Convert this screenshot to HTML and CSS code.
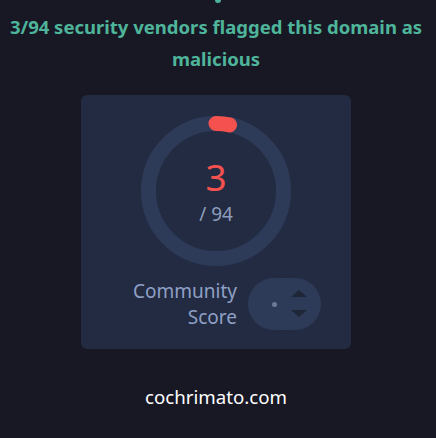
FILE: index.html
```html
<!DOCTYPE html>
<html>
<head>
<meta charset="utf-8">
<link rel="stylesheet" href="styles.css">
</head>
<body>
<div class="page">
  <div class="frag"></div>
  <h1 class="title">3/94 security vendors flagged this domain as malicious</h1>
  <div class="card">
    <div class="gauge">
      <svg width="150" height="150" viewBox="0 0 150 150">
        <circle cx="75" cy="75" r="67.5" fill="none" stroke="#2d3b58" stroke-width="15"/>
        <path d="M75 7.5 A67.5 67.5 0 0 1 88.5 8.9" fill="none" stroke="#f5524f" stroke-width="15" stroke-linecap="round"/>
      </svg>
      <div class="gauge-text">
        <div class="num">3</div>
        <div class="total">/ 94</div>
      </div>
    </div>
    <div class="community">
      <div class="label">Community<br>Score</div>
      <div class="pill">
        <span class="dot"></span>
        <span class="arrows">
          <svg width="16" height="28" viewBox="0 0 16 28"><path d="M8 0 L16 7 L0 7 Z" fill="#1f2638"/><path d="M0 20 L16 20 L8 27 Z" fill="#1f2638"/></svg>
        </span>
      </div>
    </div>
  </div>
  <div class="domain">cochrimato.com</div>
</div>
</body>
</html>
```
FILE: styles.css
```css
html, body { margin: 0; padding: 0; }
body {
  background: #181825;
  font-family: "Noto Sans", "Open Sans", sans-serif;
  width: 436px;
  height: 438px;
  overflow: hidden;
}
.page { width: 432px; display: flex; flex-direction: column; align-items: center; }
.frag {
  width: 6px; height: 3px; background: #4eb59a; border-radius: 0 0 3px 3px;
  margin-left: 4px;
}
.title {
  margin: 8px 0 0;
  font-size: 18.5px;
  font-weight: 700;
  line-height: 32px;
  color: #4eb59a;
  text-align: center;
  width: 430px;
}
.card {
  margin-top: 20px;
  width: 270px;
  box-sizing: border-box;
  background: #232b42;
  border-radius: 6px;
  padding: 21px 0 19px;
  display: flex;
  flex-direction: column;
  align-items: center;
}
.gauge { position: relative; width: 150px; height: 150px; }
.gauge svg { display: block; }
.gauge-text {
  position: absolute; inset: 0;
  display: flex; flex-direction: column; align-items: center; justify-content: center;
}
.num { color: #f5524f; font-size: 37px; line-height: 38px; margin-top: 2px; }
.total { color: #8e9cbb; font-size: 19px; line-height: 24px; margin-top: 6px; }
.community {
  margin-top: 12px;
  align-self: stretch;
  display: flex;
  justify-content: flex-end;
  align-items: center;
  gap: 11px;
  padding-right: 30px;
}
.label {
  color: #8fa0c6;
  font-size: 19px;
  line-height: 26px;
  text-align: right;
}
.pill {
  width: 73px; height: 52px; border-radius: 26px;
  background: #2d3b58;
  display: flex; align-items: center;
  box-sizing: border-box;
  padding-left: 24px;
}
.dot { width: 5px; height: 5px; border-radius: 50%; background: #6b7a99; }
.arrows { margin-left: 14px; display: flex; }
.arrows svg { display: block; }
.domain {
  margin-top: 35px;
  color: #ffffff;
  font-size: 18.7px;
  line-height: 26px;
}
```
